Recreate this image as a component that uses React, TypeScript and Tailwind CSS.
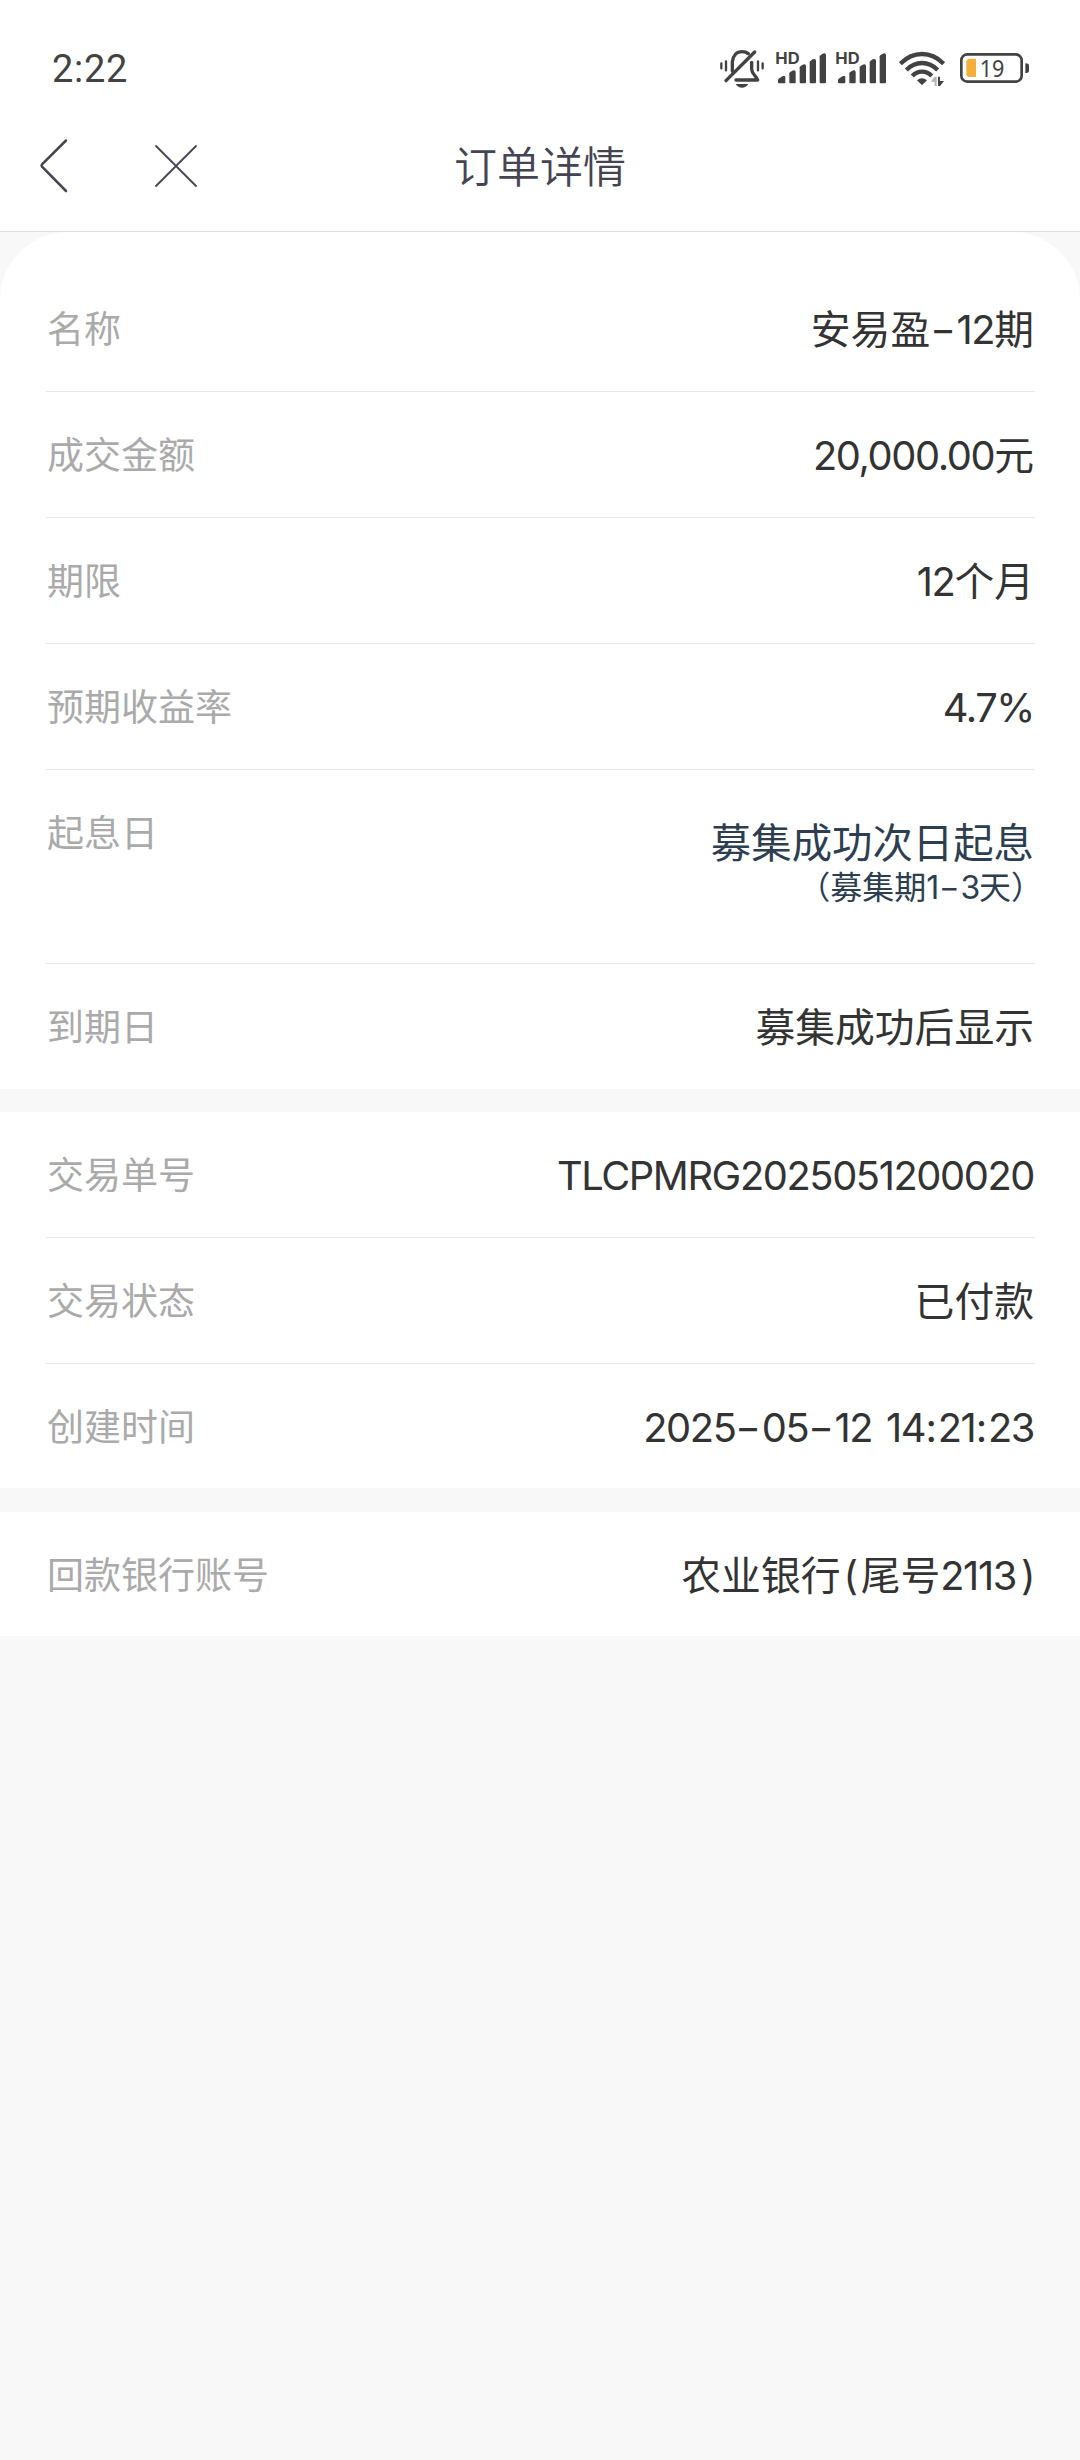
import type { ReactNode } from 'react';

const INK = '#424242';

function MutedBellIcon() {
  return (
    <svg width="46" height="42" viewBox="57 54 138 126" fill="none" stroke={INK} strokeLinecap="round">
      <path d="M97 124V96C99 77 110 65 126 65C134 65 140 67 145 71" strokeWidth="10" />
      <path d="M78 152L164 66" strokeWidth="10" />
      <path d="M155 97V118C156 132 168 137 173 150H108" strokeWidth="10" strokeLinejoin="round" />
      <path d="M64 100V115M78 94V121M174 94V121M188 100V115" strokeWidth="7" />
      <path d="M107 162H145C140 170 134 173 126 173C118 173 112 170 107 162Z" fill={INK} stroke="none" />
    </svg>
  );
}

function HdSignalIcon() {
  return (
    <svg width="50" height="42" viewBox="228 54 150 126" fill={INK}>
      <text x="226" y="101" fontFamily="Inter, sans-serif" fontWeight="700" fontSize="47" textLength="73" lengthAdjust="spacingAndGlyphs">
        HD
      </text>
      <path d="M234 151Q234 148 238 145L245 140Q247 138 250 138H253Q256 138 256 142V157Q256 160 253 160H237Q234 160 234 157Z" />
      <path d="M268 130Q268 128 271 126L277 122Q279 121 282 121Q287 121 287 126V157Q287 160 284 160H271Q268 160 268 157Z" />
      <path d="M299 112Q299 110 302 108L308 104Q310 103 313 103Q318 103 318 108V157Q318 160 315 160H302Q299 160 299 157Z" />
      <path d="M329 96Q329 94 332 92L338 88Q340 87 343 87Q348 87 348 92V157Q348 160 345 160H332Q329 160 329 157Z" />
      <path d="M359 79Q359 77 362 75L368 71Q370 70 373 70Q378 70 378 75V157Q378 160 375 160H362Q359 160 359 157Z" />
    </svg>
  );
}

function WifiIcon() {
  return (
    <svg width="46" height="42" viewBox="597 54 138 126" fill="none" stroke={INK} strokeWidth="13">
      <path d="M601 101Q630 72 666 72Q702 72 731 101" />
      <path d="M619 120Q640 99 666 99Q692 99 713 120" />
      <path d="M637 138Q649 125 666 125Q683 125 695 138" />
      <path d="M651 151Q666 138 681 151L669 163Q666 166 663 163Z" fill={INK} stroke="none" />
      <path d="M692 155L704 140H710V168H704V155Z" fill="#b5b5b5" stroke="none" />
      <path d="M714 140H720V153H732L720 168H714Z" fill={INK} stroke="none" />
    </svg>
  );
}

function BatteryIcon() {
  return (
    <svg width="69" height="42" viewBox="780 54 207 126">
      <rect x="784" y="73" width="181" height="82" rx="18" fill="none" stroke={INK} strokeWidth="8" />
      <path d="M976 100Q987 100 987 107V122Q987 129 976 129Z" fill={INK} />
      <path d="M809 86H828V141H809Q799 141 799 131V96Q799 86 809 86Z" fill="#f5ae3c" />
      <text x="839" y="141" fontFamily="'Noto Sans', sans-serif" fontSize="68" fill={INK} textLength="74" lengthAdjust="spacingAndGlyphs">
        19
      </text>
    </svg>
  );
}

function StatusBar() {
  return (
    <div className="flex h-[101px] items-center justify-between pt-[37px] pr-[51px] pl-[52px]">
      <span className="font-[Roboto,sans-serif] text-[38px] leading-none tracking-[0.7px] text-[#424242]">2:22</span>
      <div className="flex items-center">
        <MutedBellIcon />
        <span className="ml-[11px]"><HdSignalIcon /></span>
        <span className="ml-[10px]"><HdSignalIcon /></span>
        <span className="ml-[13px]"><WifiIcon /></span>
        <span className="ml-[15px]"><BatteryIcon /></span>
      </div>
    </div>
  );
}

function NavBar() {
  return (
    <div className="grid h-[130px] grid-cols-[1fr_auto_1fr] items-center">
      <div className="flex items-center pl-[38px]">
        <button aria-label="返回">
          <svg className="block" width="32" height="56" fill="none" stroke="#454452" strokeWidth="2.5" strokeLinecap="round" strokeLinejoin="round">
            <path d="M28 2.5L4 26.4Q3 27.5 4 28.6L28 53" />
          </svg>
        </button>
        <button aria-label="关闭" className="ml-[84px]">
          <svg className="block" width="44" height="44" fill="none" stroke="#454452" strokeWidth="1.8" strokeLinecap="round">
            <path d="M2 2L42 42M42 2L2 42" />
          </svg>
        </button>
      </div>
      <h1 className="pb-[4px] text-[43px] leading-none font-[350] text-[#454452]">订单详情</h1>
      <div />
    </div>
  );
}

function Latin({ children }: { children: string }) {
  return (
    <span className="font-[Inter,sans-serif] leading-none tracking-[-1.4px] [word-spacing:4px]">
      {children.split(/([-.,:()])/).map((part, i) => {
        if (part === '-') {
          return <span key={i} className="mx-[4px] inline-block scale-x-[1.4] tracking-normal">-</span>;
        }
        if (part === ':') return <span key={i} className="mr-[2px] ml-[0.5px]">:</span>;
        if (part === '(') return <span key={i} className="mr-[4px] ml-[3px]">(</span>;
        if (part === ')') return <span key={i} className="ml-[5px]">)</span>;
        return part;
      })}
    </span>
  );
}

function Row({ label, tall = false, children }: { label: string; tall?: boolean; children: ReactNode }) {
  return (
    <div className={`flex items-start justify-between border-b border-[#e9e9e9] last:border-b-0 ${tall ? 'h-[194px]' : 'h-[126px] last:h-[125px]'}`}>
      <span className="pl-px text-[37px] leading-[123px] text-[#aaaaaa]">{label}</span>
      <div className="pr-px text-right text-[39.8px] leading-[122px] text-[#333333]">{children}</div>
    </div>
  );
}

export default function App() {
  return (
    <div className="min-h-[2460px] w-[1080px] bg-[#f8f8f8] font-['Noto_Sans_CJK_SC',sans-serif]">
      <header className="border-b border-[#dedede] bg-white">
        <StatusBar />
        <NavBar />
      </header>
      <main className="flex flex-col gap-[23px]">
        <section className="rounded-t-[68px] bg-white pt-[34px] pr-[45px] pl-[46px]">
          <Row label="名称">安易盈<Latin>-12</Latin>期</Row>
          <Row label="成交金额"><Latin>20,000.00</Latin>元</Row>
          <Row label="期限"><Latin>12</Latin>个月</Row>
          <Row label="预期收益率"><Latin>4.7%</Latin></Row>
          <Row label="起息日" tall>
            <div className="flex flex-col pt-[48px] text-[#2c3e50]">
              <span className="text-[40.4px] leading-[46px]">募集成功次日起息</span>
              <span className="-mr-[9px] text-[32px] leading-[42px]">（募集期<Latin>1-3</Latin>天）</span>
            </div>
          </Row>
          <Row label="到期日">募集成功后显示</Row>
        </section>
        <section className="h-[376px] bg-white pr-[45px] pl-[46px]">
          <Row label="交易单号"><Latin>TLCPMRG2025051200020</Latin></Row>
          <Row label="交易状态">已付款</Row>
          <Row label="创建时间"><Latin>2025-05-12 14:21:23</Latin></Row>
        </section>
        <section className="mt-px h-[124px] bg-white pr-[45px] pl-[46px]">
          <Row label="回款银行账号">农业银行<Latin>(</Latin>尾号<Latin>2113)</Latin></Row>
        </section>
      </main>
    </div>
  );
}
